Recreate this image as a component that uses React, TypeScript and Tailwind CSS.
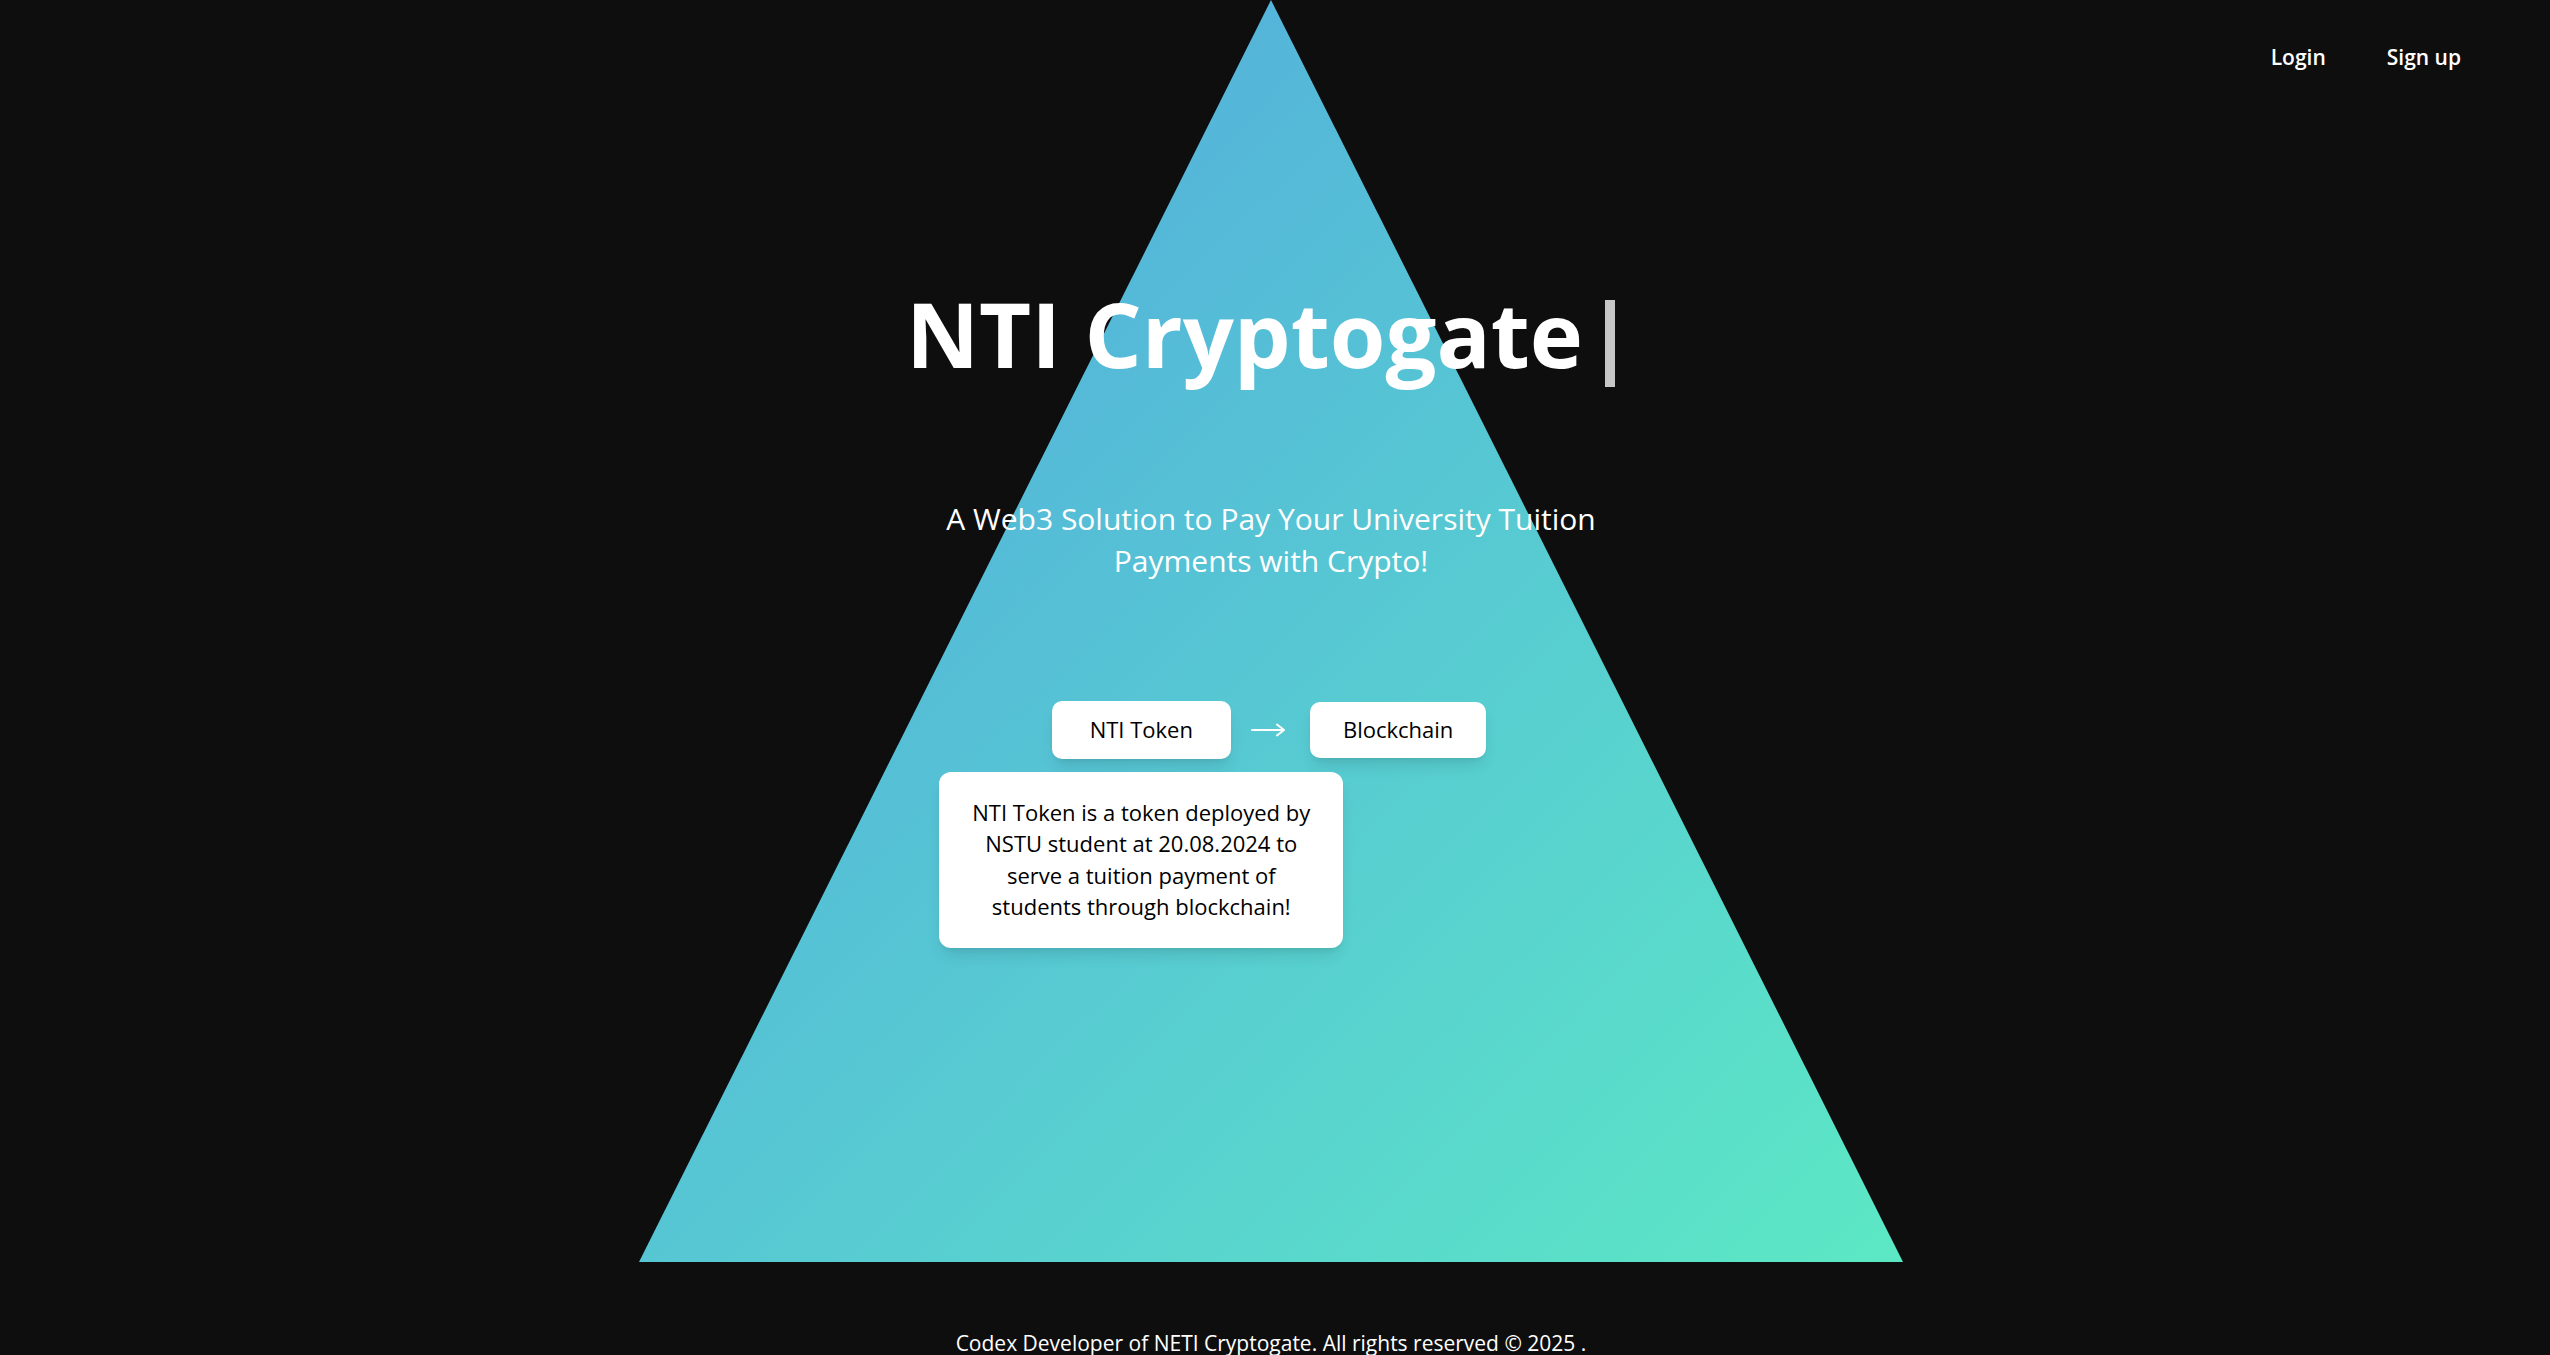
export default function App() {
  return (
    <div className="min-h-screen bg-[#0e0e0e] font-['Open_Sans',sans-serif] text-white">
      <section className="relative h-[1262px]">
        {/* triangle backdrop */}
        <div className="absolute top-0 left-1/2 -ml-[636px] h-[1262px] w-[1264px] bg-linear-to-br from-[#53a3df] to-[#5ce8c4] [clip-path:polygon(50%_0,0_100%,100%_100%)]" />

        <header className="relative flex justify-end gap-[61px] pr-[89px] pt-[42px] text-[21px] leading-[31.5px] font-semibold">
          <a href="#" className="hover:text-gray-300">
            Login
          </a>
          <a href="#" className="hover:text-gray-300">
            Sign up
          </a>
        </header>

        <main className="relative mt-[192px] flex flex-col items-center pr-[8px]">
          <h1 className="flex items-center pr-[21px] text-[90px] leading-[135px] font-bold">
            <span>NTI Cryptogate</span>
            <span aria-hidden className="ml-[22px] mt-[21px] inline-block h-[87px] w-[10px] bg-[#c6c6c6]" />
          </h1>

          <p className="mt-[97px] max-w-[720px] text-center text-[30px] leading-[42px]">
            A Web3 Solution to Pay Your University Tuition Payments with Crypto!
          </p>

          <div className="mt-[119px] flex items-center pr-[4px] text-black">
            <div className="relative">
              <button className="flex h-[58px] items-center rounded-[10px] bg-white px-[38px] text-[22px] shadow-lg">
                NTI Token
              </button>
              <div className="absolute top-[calc(100%+13px)] left-1/2 w-[404px] -translate-x-1/2 rounded-[12px] bg-white px-[28px] py-[25px] text-center text-[22px] leading-[31.5px] shadow-lg">
                NTI Token is a token deployed by NSTU student at 20.08.2024 to serve a tuition payment of students through blockchain!
              </div>
            </div>
            <svg className="mx-[20px] w-[35px] text-white" height="14" viewBox="0 0 35 14" fill="none">
              <path d="M1 7h32M26 1.5 33 7l-7 5.5" stroke="currentColor" strokeWidth="2" strokeLinecap="round" strokeLinejoin="round" />
            </svg>
            <button className="ml-[4px] flex h-[56px] items-center rounded-[10px] bg-white px-[33px] text-[22px] shadow-lg">
              Blockchain
            </button>
          </div>
        </main>
      </section>

      <footer className="pt-[66px] pb-[40px] pr-[8px] text-center text-[21px] leading-[31.5px]">
        Codex Developer of NETI Cryptogate. All rights reserved © 2025 .
      </footer>
    </div>
  );
}
